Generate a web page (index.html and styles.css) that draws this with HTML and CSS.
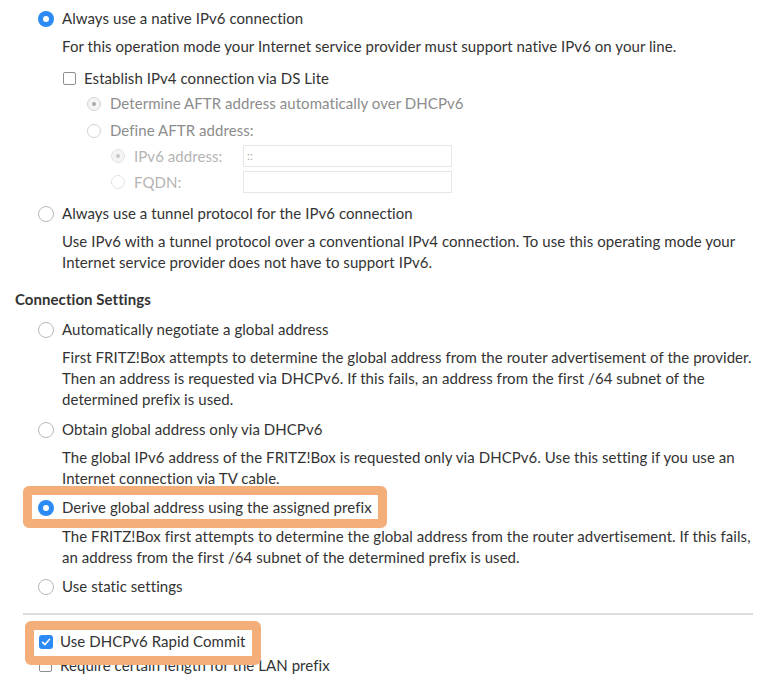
FILE: index.html
```html
<!DOCTYPE html>
<html lang="en">
<head>
<meta charset="utf-8">
<title>IPv6 settings</title>
<link rel="stylesheet" href="styles.css">
</head>
<body>
<div class="page">
  <div class="lvl1">
    <div class="row"><span class="radio checked"></span><span class="label">Always use a native IPv6 connection</span></div>
    <p class="desc mt7">For this operation mode your Internet service provider must support native IPv6 on your line.</p>
    <div class="lvl2">
      <div class="row mt11"><span class="checkbox"></span><span class="label">Establish IPv4 connection via DS Lite</span></div>
      <div class="lvl3">
        <div class="row mt4 disabled"><span class="radio small dis-checked"></span><span class="label">Determine AFTR address automatically over DHCPv6</span></div>
        <div class="row mt6 disabled"><span class="radio small dis"></span><span class="label">Define AFTR address:</span></div>
        <div class="lvl4">
          <div class="field mt4 disabled2"><span class="radio small dis-checked light"></span><span class="flabel">IPv6 address:</span><span class="input">::</span></div>
          <div class="field mt4 disabled2"><span class="radio small dis light"></span><span class="flabel">FQDN:</span><span class="input"></span></div>
        </div>
      </div>
    </div>
    <div class="row mt10"><span class="radio"></span><span class="label">Always use a tunnel protocol for the IPv6 connection</span></div>
    <p class="desc mt7">Use IPv6 with a tunnel protocol over a conventional IPv4 connection. To use this operating mode your<br>Internet service provider does not have to support IPv6.</p>
  </div>

  <h3 class="heading">Connection Settings</h3>

  <div class="lvl1">
    <div class="row mt9"><span class="radio"></span><span class="label">Automatically negotiate a global address</span></div>
    <p class="desc mt7">First FRITZ!Box attempts to determine the global address from the router advertisement of the provider.<br>Then an address is requested via DHCPv6. If this fails, an address from the first /64 subnet of the<br>determined prefix is used.</p>
    <div class="row mt9"><span class="radio"></span><span class="label">Obtain global address only via DHCPv6</span></div>
    <p class="desc mt7">The global IPv6 address of the FRITZ!Box is requested only via DHCPv6. Use this setting if you use an<br>Internet connection via TV cable.</p>
    <div class="row mt8"><span class="hl hl-a"><span class="radio checked"></span><span class="label">Derive global address using the assigned prefix</span></span></div>
    <p class="desc mt8">The FRITZ!Box first attempts to determine the global address from the router advertisement. If this fails,<br>an address from the first /64 subnet of the determined prefix is used.</p>
    <div class="row mt8"><span class="radio"></span><span class="label">Use static settings</span></div>
  </div>

  <hr class="sep">

  <div class="lvl1b">
    <div class="row"><span class="hl hl-b"><span class="checkbox checked"><svg viewBox="0 0 14 14" width="14" height="14"><path d="M3.6 7.3 L6 9.6 L10.4 4.4" fill="none" stroke="#fff" stroke-width="1.6" stroke-linecap="round" stroke-linejoin="round"/></svg></span><span class="label">Use DHCPv6 Rapid Commit</span></span></div>
    <div class="row mt3"><span class="checkbox"></span><span class="label">Require certain length for the LAN prefix</span></div>
  </div>
</div>
</body>
</html>
```

FILE: styles.css
```css
* { box-sizing: border-box; }

html, body {
  margin: 0;
  padding: 0;
  background: #fff;
}

body {
  font-family: "Lato", "Noto Sans", sans-serif;
  font-size: 15px;
  line-height: 21px;
  letter-spacing: 0.06px;
  color: #333;
  overflow: hidden;
}

.page {
  padding: 8px 16px 0 15px;
  width: 769px;
  height: 686px;
}

.lvl1 { margin-left: 23px; }
.lvl1b { margin-left: 24px; }
.lvl2 { margin-left: 25px; }
.lvl3 { margin-left: 24px; }
.lvl4 { margin-left: 24px; }

.row {
  display: flex;
  align-items: center;
  height: 21px;
  white-space: nowrap;
}

.desc {
  margin: 0;
  margin-left: 24px;
  white-space: nowrap;
}

.mt3 { margin-top: 3px; }
.mt4 { margin-top: 4px; }
.mt6 { margin-top: 6px; }
.mt7 { margin-top: 7px; }
.mt8 { margin-top: 8px; }
.mt9 { margin-top: 9px; }
.mt10 { margin-top: 10px; }
.mt11 { margin-top: 11px; }

.radio {
  flex: none;
  width: 16px;
  height: 16px;
  border-radius: 50%;
  border: 1px solid #b8b8b8;
  background: #fff;
  margin-right: 8px;
  position: relative;
}

.radio.checked {
  border: none;
  background: #2b8af4;
}

.radio.checked::after {
  content: "";
  position: absolute;
  left: 5px;
  top: 5px;
  width: 6px;
  height: 6px;
  border-radius: 50%;
  background: #fff;
}

.radio.small {
  width: 14px;
  height: 14px;
  margin-right: 9px;
  border-color: #d2d2d2;
}

.radio.dis-checked {
  background: #f4f4f4;
}

.radio.dis-checked::after {
  content: "";
  position: absolute;
  left: 4px;
  top: 4px;
  width: 4px;
  height: 4px;
  border-radius: 50%;
  background: #a9a9a9;
}

.radio.light { border-color: #e2e2e2; }
.radio.light::after { background: #c8c8c8; }

.checkbox {
  flex: none;
  width: 13px;
  height: 13px;
  border: 1px solid #8f8f8f;
  border-radius: 2px;
  background: #fff;
  margin-right: 8px;
  display: flex;
  align-items: center;
  justify-content: center;
}

.checkbox.checked {
  width: 14px;
  height: 14px;
  border: none;
  border-radius: 3px;
  background: #2b8af4;
  margin-right: 7px;
}

.checkbox svg { display: block; }

.disabled { color: #8c8c8c; }
.disabled2 { color: #b4b4b4; }

.field {
  display: flex;
  align-items: center;
  height: 22px;
  white-space: nowrap;
}

.flabel {
  width: 109px;
  flex: none;
}

.input {
  width: 209px;
  height: 22px;
  border: 1px solid #e6e6e6;
  background: #fff;
  font-size: 12px;
  line-height: 20px;
  padding-left: 3px;
  color: #b0b0b0;
}

.heading {
  margin: 16px 0 0 0;
  font-size: 15px;
  line-height: 21px;
  font-weight: 700;
  color: #333;
}

.sep {
  margin: 16px 0 0 8px;
  border: none;
  border-top: 2px solid #dcdcdc;
  height: 0;
}

.lvl1b .row:first-child { margin-top: 16px; }

.hl {
  position: relative;
  display: inline-flex;
  align-items: center;
  height: 21px;
}

.hl::before {
  content: "";
  position: absolute;
  border: 9px solid #f4ae7a;
  border-radius: 6px;
  z-index: 2;
  pointer-events: none;
}

.hl-a::before {
  left: -15px;
  right: -15px;
  top: -11px;
  bottom: -10px;
}

.hl-b::before {
  left: -14px;
  right: -15px;
  top: -10px;
  bottom: -13px;
}
```
